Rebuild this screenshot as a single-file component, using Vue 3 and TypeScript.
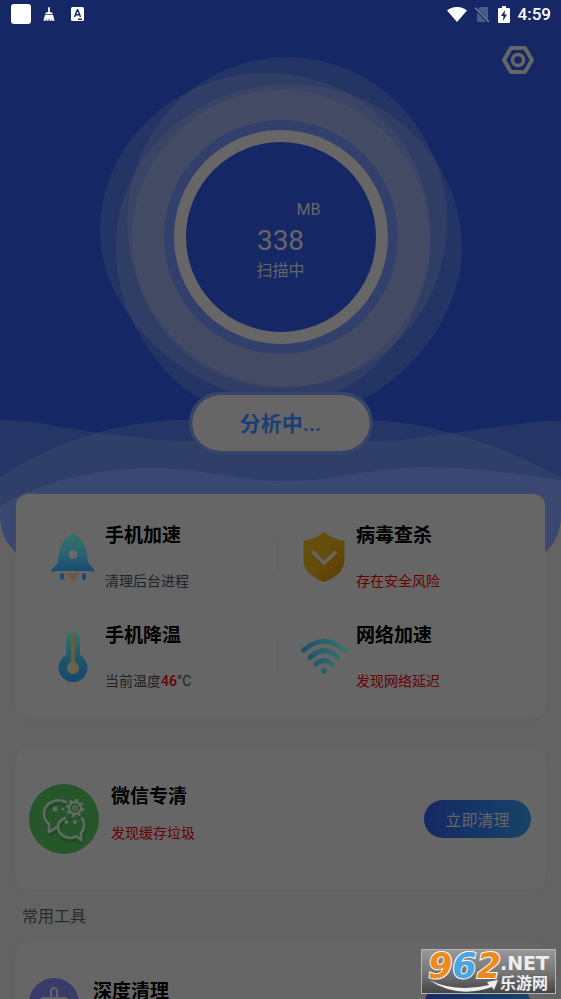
<script setup lang="ts">
interface Feature {
  icon: 'rocket' | 'shield' | 'thermo' | 'wifi'
  title: string
  note: string
  value?: string
  unit?: string
  warn?: boolean
}

const features: Feature[] = [
  { icon: 'rocket', title: '手机加速', note: '清理后台进程' },
  { icon: 'shield', title: '病毒查杀', note: '存在安全风险', warn: true },
  { icon: 'thermo', title: '手机降温', note: '当前温度', value: '46', unit: '°C' },
  { icon: 'wifi', title: '网络加速', note: '发现网络延迟', warn: true },
]
</script>

<template>
  <div class="page">
    <svg class="backdrop" viewBox="0 0 561 570" preserveAspectRatio="none" aria-hidden="true">
      <path d="M0 0H561V515Q560 540 543 554H18Q1 540 0 515Z" fill="#152865" />
      <path d="M0 420C45 421 70 430 100 433C150 439 165 441 200 441H360C410 442 440 434 475 430C510 425 530 421 561 421V515Q560 540 543 554H18Q1 540 0 515Z" fill="#666a70" fill-opacity=".2" />
      <path d="M0 477C50 445 110 422 180 420H360C430 420 500 445 561 477V515Q560 540 543 554H18Q1 540 0 515Z" fill="#666a70" fill-opacity=".2" />
      <path d="M0 506C35 485 90 468 150 468C205 468 235 481 285 481C340 481 370 467 425 467C480 467 520 475 561 480V515Q560 540 543 554H18Q1 540 0 515Z" fill="#64709a" fill-opacity=".2" />
    </svg>

    <header class="status">
      <div class="status-group">
        <span class="app-square"></span>
        <svg class="broom" width="12" height="16" viewBox="0 0 14 16">
          <path d="M6 0h2v6h1.500c1 0 1.500 1 1.800 2H2.700C3 7 3.500 6 4.500 6H6zM2.300 9h9.400L13.500 16h-2.800l-.6-3-.1 3H7.600l-.6-4-.6 4H4l.2-3.200L3 16H.5z" fill="#fff" />
        </svg>
        <svg class="keyboard" width="13" height="14" viewBox="0 0 13 14">
          <rect width="13" height="14" rx="1.500" fill="#fff" />
          <path d="M3.500 10 6.200 3h.6l2.700 7M4.600 7.700h3.800M7 12.300h4" fill="none" stroke="#152865" stroke-width="1.400" />
        </svg>
      </div>
      <div class="status-group right">
        <svg width="20" height="15" viewBox="0 0 20 15"><path d="M0 3.500C6-1.200 14-1.200 20 3.500L10 15Z" fill="#fff" /></svg>
        <svg width="15" height="17" viewBox="0 0 15 17">
          <path d="M2 4 5 1h8v15H2z" fill="#4d5a86" />
          <path d="M0 2l14 14.500" stroke="#152865" stroke-width="3" />
          <path d="M0 1.500 14 16" stroke="#7680a0" stroke-width="1.300" />
        </svg>
        <svg width="12" height="17" viewBox="0 0 12 17">
          <path d="M4 0h4v2h3q1 0 1 1v13q0 1-1 1H1q-1 0-1-1V3q0-1 1-1h3z" fill="#fff" />
          <path d="M7 4 3 10h2.500L5 15l4-6.500H6.500z" fill="#152865" />
        </svg>
        <time class="clock">4:59</time>
      </div>
    </header>

    <div class="toolbar">
      <button class="settings" type="button" aria-label="设置">
        <svg width="34" height="30" viewBox="0 0 34 30">
          <path d="M10 3h14L31 15l-7 12H10L3 15Z" fill="none" stroke="#666" stroke-width="4" stroke-linejoin="round" />
          <circle cx="17" cy="15" r="5.500" fill="none" stroke="#666" stroke-width="3.500" />
        </svg>
      </button>
    </div>

    <section class="scan">
      <div class="dial">
        <svg class="halo" viewBox="0 0 364 364" aria-hidden="true">
          <g fill="#666" fill-opacity=".2">
            <path d="M166 22C265 22 332 95 332 187C332 275 262 352 190 352C100 352 1 270 1 180C1 90 80 22 166 22Z" />
            <ellipse cx="188" cy="171" rx="160" ry="165" />
            <path d="M190 33C290 33 363 110 363 196C363 285 275 366 200 366C120 366 85 345 60 312C35 280 17 245 17 196C17 105 95 33 190 33Z" />
            <circle cx="182" cy="188" r="149" />
          </g>
          <circle cx="182" cy="186" r="117" fill="#33406c" />
          <circle cx="182" cy="186" r="101" fill="#152865" stroke="#666" stroke-width="12" />
        </svg>
        <div class="reading">
          <span class="unit">MB</span>
          <span class="amount">338</span>
          <span class="state">扫描中</span>
        </div>
      </div>
      <button class="analyse" type="button">分析中...</button>
    </section>

    <main class="content">
      <section class="card features">
        <a v-for="f in features" :key="f.title" class="feature" href="#">
          <svg v-if="f.icon === 'rocket'" class="icon" viewBox="0 0 48 52">
            <defs>
              <linearGradient id="rocket" x1="0" y1="0" x2="0" y2="1">
                <stop offset="0" stop-color="#367463" /><stop offset=".5" stop-color="#2a6570" /><stop offset="1" stop-color="#184a70" />
              </linearGradient>
            </defs>
            <path d="M24 1C33 8 39 17 38.500 29Q39 32 42 35Q45 37 45.500 40Q45 42 42 40H6Q3 42 2.500 40Q3 37 6 35Q9 32 9.500 29C9 17 15 8 24 1Z" fill="url(#rocket)" />
            <circle cx="24" cy="23.500" r="4.500" fill="#6a6a6a" />
            <path d="M17 42H31L24 51Z" fill="#725440" />
            <rect x="11" y="42" width="4" height="7" rx="2" fill="#1d4b6c" />
            <rect x="33" y="42" width="4" height="7" rx="2" fill="#1d4b6c" />
          </svg>
          <svg v-else-if="f.icon === 'shield'" class="icon" viewBox="0 0 48 52">
            <defs>
              <linearGradient id="shield" x1="0" y1="0" x2="1" y2="1">
                <stop offset="0" stop-color="#655312" /><stop offset=".5" stop-color="#654c09" /><stop offset="1" stop-color="#593b05" />
              </linearGradient>
            </defs>
            <path d="M24 1Q34 9 44.500 9.500V30C44 41 34 47 24 51C14 47 4 41 3.500 30V9.500Q14 9 24 1Z" fill="url(#shield)" />
            <path d="M13.500 21.500 24 32 35 21.500" fill="none" stroke="#686563" stroke-width="3.500" stroke-linecap="round" />
          </svg>
          <svg v-else-if="f.icon === 'thermo'" class="icon" viewBox="0 0 48 52">
            <defs>
              <linearGradient id="thermo" x1="0" y1="0" x2="0" y2="1">
                <stop offset="0" stop-color="#367463" /><stop offset=".6" stop-color="#1d526c" /><stop offset="1" stop-color="#184970" />
              </linearGradient>
            </defs>
            <path d="M17 8a7 7 0 0 1 14 0V24a14.500 14.500 0 1 1-14 0Z" fill="url(#thermo)" />
            <path d="M24 6V37" stroke="#6a5d3e" stroke-width="4" stroke-linecap="round" />
            <circle cx="24" cy="37" r="6" fill="#6a624c" />
          </svg>
          <svg v-else class="icon" viewBox="0 0 48 52">
            <defs>
              <linearGradient id="wifi" gradientUnits="userSpaceOnUse" x1="0" y1="0" x2="48" y2="0">
                <stop offset="0" stop-color="#1c4e6d" /><stop offset="1" stop-color="#397667" />
              </linearGradient>
            </defs>
            <g fill="none" stroke="url(#wifi)" stroke-width="5" stroke-linecap="round">
              <path d="M3.500 19.500Q24 1 44.500 19.500" />
              <path d="M10 26.500Q24 13 38 26.500" />
              <path d="M16 33Q24 26 32 33" />
            </g>
            <circle cx="24" cy="40" r="3" fill="#26606b" />
          </svg>
          <div class="texts">
            <h2>{{ f.title }}</h2>
            <p :class="{ warn: f.warn }">{{ f.note }}<b v-if="f.value">{{ f.value }}</b>{{ f.unit }}</p>
          </div>
        </a>
      </section>

      <section class="card wechat">
        <svg class="wechat-icon" viewBox="0 0 70 70" aria-hidden="true">
          <circle cx="35" cy="35" r="35" fill="#26562a" />
          <g fill="none" stroke="#1f4823" stroke-width="3" stroke-linejoin="round" opacity=".6" transform="translate(1 3)">
            <path d="M37 18C26 13 15 20 15 30C15 35 17 38 20 40V48L28 43" />
            <path d="M42 32C34 32 29 37 29 43C29 49 35 54 42 54Q45 54 47 52L52 56V49C56 45 56 38 53 34" />
          </g>
          <g fill="none" stroke="#5f6d60" stroke-width="2.600" stroke-linejoin="round" stroke-linecap="round">
            <path d="M37 18C26 13 15 20 15 30C15 35 17 38 20 40V48L28 43" />
            <path d="M36 34C31 36 29 39 29 43C29 49 35 54 42 54Q45 54 47 52L52 56V49C56 45 56 38 53 34" />
            <circle cx="46" cy="24" r="6" stroke-width="2.500" />
            <circle cx="46" cy="24" r="2" stroke-width="1.500" />
            <circle cx="46" cy="24" r="8" stroke-width="2.500" stroke-dasharray="3 3.283" stroke-linecap="butt" />
          </g>
          <g fill="#5f6d60">
            <circle cx="26" cy="25" r="2.500" /><circle cx="34" cy="25" r="1.500" />
            <circle cx="37.500" cy="38" r="2" /><circle cx="46" cy="38" r="2" />
          </g>
        </svg>
        <div class="texts">
          <h2>微信专清</h2>
          <p class="warn">发现缓存垃圾</p>
        </div>
        <button class="clean" type="button">立即清理</button>
      </section>

      <h3 class="heading">常用工具</h3>

      <section class="card tool">
        <svg class="tool-icon" viewBox="0 0 50 50" aria-hidden="true">
          <circle cx="25" cy="25" r="25" fill="#393c69" />
          <path d="M22 22V13a3 3 0 0 1 6 0v9M13 20h24v7H13z" fill="none" stroke="#62646f" stroke-width="2" stroke-linejoin="round" />
        </svg>
        <div class="texts">
          <h2>深度清理</h2>
        </div>
        <button class="clean" type="button" aria-label="立即清理"></button>
      </section>
    </main>

    <aside class="stamp">
      <svg width="135" height="45" viewBox="0 0 135 45">
        <defs>
          <linearGradient id="plate" x1="0" y1="0" x2="0" y2="1">
            <stop offset="0" stop-color="#999" /><stop offset=".5" stop-color="#777" /><stop offset="1" stop-color="#444" />
          </linearGradient>
        </defs>
        <rect x=".5" y=".5" width="134" height="44" fill="url(#plate)" stroke="#b4b4b4" />
        <path d="M8 31Q36 44 68 36L66 33L77 31L73 41L71 38Q36 50 8 31Z" fill="#eee" />
        <text class="digits" x="7" y="29"><tspan class="orange">9</tspan><tspan class="blue">6</tspan><tspan class="orange">2</tspan></text>
        <text class="net" x="79" y="21">.NET</text>
        <text class="site" x="79" y="40">乐游网</text>
      </svg>
    </aside>
  </div>
</template>

<style>
body {
  margin: 0;
  background: #636363;
}
</style>

<style scoped>
.page {
  position: relative;
  height: 100vh;
  overflow: hidden;
  background: #636363;
  color: #666;
  font-family: Roboto, "Noto Sans CJK SC", sans-serif;
}
.backdrop {
  position: absolute;
  top: 0;
  left: 0;
  width: 100%;
  height: 570px;
}
.status,
.toolbar,
.scan,
.content {
  position: relative;
}
.status {
  display: flex;
  justify-content: space-between;
  align-items: center;
  height: 28px;
  padding: 0 10px 0 11px;
}
.status-group {
  display: flex;
  align-items: center;
  gap: 12px;
}
.status-group.right {
  gap: 8px;
}
.app-square {
  width: 20px;
  height: 20px;
  border-radius: 3px;
  background: #fff;
}
.keyboard {
  margin-left: 4px;
}
.clock {
  color: #fff;
  font-size: 17px;
  font-weight: 500;
  line-height: 28px;
}
button {
  padding: 0;
  border: 0;
  background: none;
  font-family: inherit;
}
.toolbar {
  display: flex;
  justify-content: flex-end;
  height: 28px;
  padding: 17px 26px 0 0;
}
.settings {
  width: 34px;
  height: 30px;
}
.scan {
  display: flex;
  flex-direction: column;
  align-items: center;
  margin-top: -22px;
}
.dial {
  display: grid;
  width: 364px;
  height: 341px;
}
.halo {
  grid-area: 1 / 1;
  width: 364px;
  height: 364px;
}
.reading {
  grid-area: 1 / 1;
  display: flex;
  flex-direction: column;
  align-items: center;
  padding-top: 150px;
}
.unit {
  margin-left: 56px;
  font-size: 16px;
  line-height: 18px;
}
.amount {
  font-size: 28px;
  line-height: 44px;
}
.state {
  font-size: 16px;
  line-height: 16px;
}
.analyse {
  box-sizing: border-box;
  width: 184px;
  height: 62px;
  padding-bottom: 3px;
  border: 3px solid #37446b;
  border-radius: 31px;
  background: #666;
  background-clip: padding-box;
  color: #1a3f74;
  font-size: 21px;
  font-weight: 700;
}
.content {
  padding: 40px 16px 0;
}
.card {
  display: flex;
  border-radius: 12px;
  background: #666;
  box-shadow: 0 0 4px rgba(90, 95, 110, 0.3);
}
.features {
  display: grid;
  grid-template-columns: 251fr 278fr;
  padding: 26px 0 0;
}
.feature {
  display: flex;
  gap: 8px;
  height: 98px;
  padding-left: 33px;
  color: inherit;
  text-decoration: none;
}
.feature:nth-child(-n + 2) {
  height: 100px;
}
.feature:nth-child(even) {
  padding-left: 10px;
}
.feature:nth-child(even)::before {
  width: 2px;
  height: 34px;
  margin: 18px 13px 0 0;
  background: #626262;
  content: "";
}
.icon {
  flex: none;
  width: 48px;
  height: 52px;
  margin-top: 11px;
}
h2 {
  margin: 0;
  color: #000;
  font-size: 19px;
  font-weight: 700;
  line-height: 32px;
}
p {
  margin: 0;
  color: #222;
  font-size: 14px;
  line-height: 20px;
}
.feature p {
  margin-top: 19px;
}
.warn,
b {
  color: #660000;
}
b {
  font-weight: 500;
}
.wechat {
  align-items: center;
  margin-top: 30px;
  height: 141px;
  padding: 0 14px 0 13px;
}
.wechat-icon {
  width: 70px;
  height: 70px;
  margin-right: 12px;
}
.wechat .texts {
  flex: 1;
  padding-bottom: 14px;
}
.wechat p {
  margin-top: 10px;
}
.clean {
  width: 107px;
  height: 38px;
  border-radius: 19px;
  background: linear-gradient(90deg, #152865, #164467);
  color: #666;
  font-size: 16px;
}
.heading {
  margin: 16px 6px 0;
  color: #2a2a2a;
  font-size: 16px;
  font-weight: 400;
  line-height: 24px;
}
.tool {
  margin-top: 13px;
  height: 141px;
  padding: 0 14px 0 13px;
}
.tool-icon {
  width: 50px;
  height: 50px;
  margin: 36px 14px 0 0;
}
.tool .texts {
  flex: 1;
  padding-top: 34px;
}
.tool .clean {
  margin-top: 44px;
}
.stamp {
  position: absolute;
  right: 5px;
  bottom: 5px;
  display: flex;
}
.digits {
  font: italic 700 35px "DejaVu Sans", sans-serif;
  stroke: #fff;
  stroke-width: 2px;
  paint-order: stroke;
}
.orange {
  fill: #ee8a1d;
}
.blue {
  fill: #4aa5e0;
}
.net {
  fill: #eee;
  font: 700 19px "DejaVu Sans", sans-serif;
}
.site {
  fill: #eee;
  font: 700 16px "Noto Sans CJK SC", sans-serif;
}
</style>
